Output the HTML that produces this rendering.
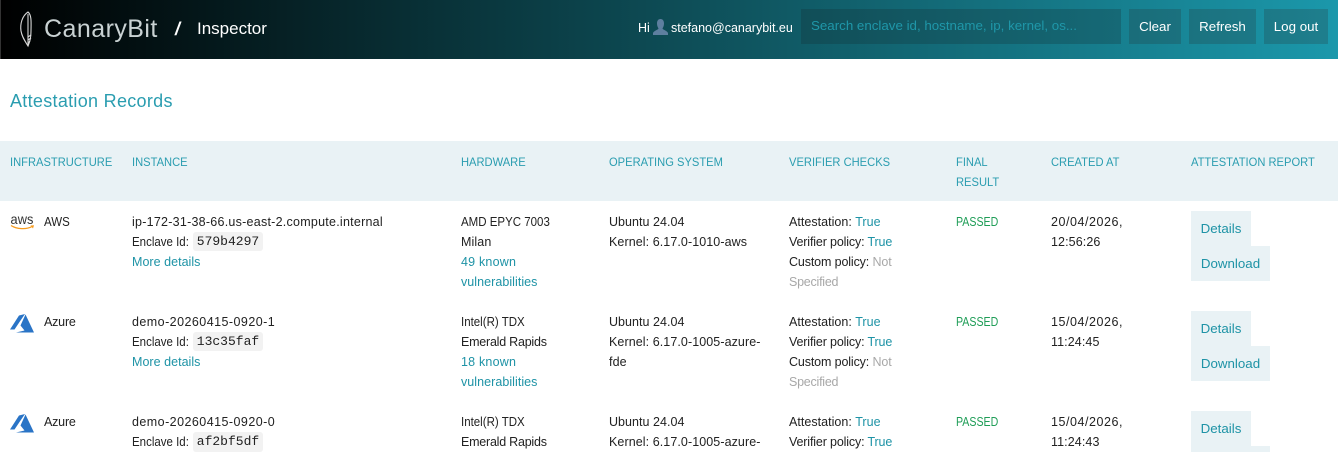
<!DOCTYPE html>
<html><head><meta charset="utf-8"><title>Inspector</title>
<style>
html,body{margin:0;padding:0;background:#fff;overflow:hidden;width:1338px;height:452px}
#p{position:relative;width:1338px;height:452px;overflow:hidden;font-family:"Liberation Sans",sans-serif;font-size:12.5px;color:#222;letter-spacing:.1px}
#p div,#p svg{position:absolute}
.t{white-space:nowrap;line-height:20px;height:20px}
.l{color:#1e93a6}.g{color:#a8a8a8}
.p{color:#1f9d57;letter-spacing:0;transform:scaleX(.85);transform-origin:0 0}
.h{color:#2a9db0;font-size:12px;letter-spacing:0;transform:scaleX(.93);transform-origin:0 0}
.q{letter-spacing:0;transform:scaleX(.92);transform-origin:0 0}
.m{letter-spacing:.03px}
.d{letter-spacing:.45px}
.k{letter-spacing:.08px}
.v{letter-spacing:-.15px}
.u{letter-spacing:-.13px}
.s{letter-spacing:-.24px}
.y{letter-spacing:.55px}
.b{background:#e9f2f5;color:#1e93a6;font-size:13.33px;letter-spacing:0;line-height:35px;height:35px;text-align:center}
.c{background:#f2f2f2;border-radius:3px;width:70px;height:19px;left:193px;font:13px/19px "Liberation Mono",monospace;letter-spacing:0;text-align:center;color:#222}
.w{background:rgba(40,40,40,.22);color:#fff;font-size:13.33px;letter-spacing:0;line-height:35px;height:35px;top:9px;text-align:center}
</style></head><body>
<div id="p">
<div style="left:0;top:0;width:1338px;height:59px;background:linear-gradient(90deg,#000 0,#1b98ab 100%)"></div>
<div style="left:0;top:0;width:1px;height:59px;background:#333"></div>
<svg style="left:18px;top:10px" width="18" height="39" viewBox="0 0 18 39" fill="none" stroke="#d8d8d8" stroke-width="1.1"><path d="M10 2C4 6 2 14 3 21C4 27 7 31 10 36C12 31 13 28 13 21C13 14 14 5 10 2Z"/><path d="M10 4V36M10 27L13 25M10 30L13 28M10 33L12 31"/></svg>
<div class="t" style="left:44px;top:15px;height:29px;line-height:29px;font-size:25px;letter-spacing:.45px;color:#c9d2d3">CanaryBit</div>
<div class="t" style="left:175px;top:19px;font-size:18px;font-style:italic;font-weight:bold;color:#fff;letter-spacing:0">/</div>
<div class="t" style="left:197px;top:19px;font-size:17px;color:#fff;letter-spacing:0">Inspector</div>
<div class="t" style="left:638px;top:18px;color:#fff;font-size:12.5px;letter-spacing:0">Hi</div>
<svg style="left:653px;top:19px" width="15" height="16" viewBox="0 0 15 16"><path d="M7.500 0C10 0 11 2 11 4.500C11 7 10 8.500 9.500 9.500C10 11 14 11.500 15 14V16H0V14C1 11.500 5 11 5.500 9.500C5 8.500 4 7 4 4.500C4 2 5 0 7.500 0Z" fill="#5e7f9f"/></svg>
<div class="t" style="left:671px;top:18px;color:#fff;font-size:12.5px;letter-spacing:0">stefano@canarybit.eu</div>
<div style="left:801px;top:9px;width:320px;height:35px;background:rgba(20,40,45,.25)"></div>
<div class="t" style="left:811px;top:16px;color:#1f97a9;font-size:13.33px;letter-spacing:0">Search enclave id, hostname, ip, kernel, os...</div>
<div class="w" style="left:1129px;width:52px">Clear</div>
<div class="w" style="left:1189px;width:67px">Refresh</div>
<div class="w" style="left:1264px;width:64px">Log out</div>

<div class="t" style="left:10px;top:90px;height:22px;line-height:22px;font-size:18px;letter-spacing:.3px;color:#2a9db0">Attestation Records</div>

<div style="left:0;top:141px;width:1338px;height:60px;background:#e9f2f5"></div>
<div class="t h" style="left:10px;top:152px">INFRASTRUCTURE</div>
<div class="t h" style="left:132px;top:152px">INSTANCE</div>
<div class="t h" style="left:461px;top:152px">HARDWARE</div>
<div class="t h" style="left:609px;top:152px">OPERATING SYSTEM</div>
<div class="t h" style="left:789px;top:152px">VERIFIER CHECKS</div>
<div class="t h" style="left:956px;top:152px">FINAL</div>
<div class="t h" style="left:956px;top:172px">RESULT</div>
<div class="t h" style="left:1051px;top:152px">CREATED AT</div>
<div class="t h" style="left:1191px;top:152px">ATTESTATION REPORT</div>

<!-- row 1 -->
<svg style="left:10px;top:214px" width="25" height="17" viewBox="0 0 25 17"><text x="0.500" y="10" font-family="Liberation Sans,sans-serif" font-size="14" fill="#333" textLength="23" lengthAdjust="spacingAndGlyphs">aws</text><path d="M1 11.500C7 15.500 17 15.500 22 12.500" fill="none" stroke="#f79b1d" stroke-width="1.300"/><path d="M20.500 11.500L24 11.300L23 14.500Z" fill="#f79b1d"/></svg>
<div class="t q" style="left:44px;top:212px">AWS</div>
<div class="t" style="left:132px;top:212px;letter-spacing:.25px">ip-172-31-38-66.us-east-2.compute.internal</div>
<div class="t q" style="left:132px;top:232px">Enclave Id:</div><div class="c" style="top:232px">579b4297</div>
<div class="t l m" style="left:132px;top:252px">More details</div>
<div class="t q" style="left:461px;top:212px">AMD EPYC 7003</div>
<div class="t" style="left:461px;top:232px">Milan</div>
<div class="t l" style="left:461px;top:252px;letter-spacing:.2px">49 known</div>
<div class="t l" style="left:461px;top:272px;letter-spacing:.05px">vulnerabilities</div>
<div class="t m" style="left:609px;top:212px">Ubuntu 24.04</div>
<div class="t k" style="left:609px;top:232px">Kernel: 6.17.0-1010-aws</div>
<div class="t m" style="left:789px;top:212px">Attestation: <span class="l">True</span></div>
<div class="t v" style="left:789px;top:232px">Verifier policy: <span class="l">True</span></div>
<div class="t u" style="left:789px;top:252px">Custom policy: <span class="g">Not</span></div>
<div class="t g s" style="left:789px;top:272px">Specified</div>
<div class="t p" style="left:956px;top:212px">PASSED</div>
<div class="t y" style="left:1051px;top:212px">20/04/2026,</div>
<div class="t" style="left:1051px;top:232px">12:56:26</div>
<div class="b" style="left:1191px;top:211px;width:60px">Details</div>
<div class="b" style="left:1191px;top:246px;width:79px">Download</div>

<!-- row 2 -->
<svg style="left:10px;top:314px" width="24" height="19" viewBox="0 0 24 19"><path d="M9 1.500L15 0L9.500 8L4.500 15.500H0Z" fill="#2a74c6"/><path d="M15.500 0.500L24 18.500H6L14.500 16.500L10.500 11.500Z" fill="#2a74c6"/></svg>
<div class="t" style="left:44px;top:312px;letter-spacing:-.2px">Azure</div>
<div class="t d" style="left:132px;top:312px">demo-20260415-0920-1</div>
<div class="t q" style="left:132px;top:332px">Enclave Id:</div><div class="c" style="top:332px">13c35faf</div>
<div class="t l m" style="left:132px;top:352px">More details</div>
<div class="t q" style="left:461px;top:312px">Intel(R) TDX</div>
<div class="t" style="left:461px;top:332px;letter-spacing:-.23px">Emerald Rapids</div>
<div class="t l" style="left:461px;top:352px;letter-spacing:.2px">18 known</div>
<div class="t l" style="left:461px;top:372px;letter-spacing:.05px">vulnerabilities</div>
<div class="t m" style="left:609px;top:312px">Ubuntu 24.04</div>
<div class="t k" style="left:609px;top:332px">Kernel: 6.17.0-1005-azure-</div>
<div class="t" style="left:609px;top:352px">fde</div>
<div class="t m" style="left:789px;top:312px">Attestation: <span class="l">True</span></div>
<div class="t v" style="left:789px;top:332px">Verifier policy: <span class="l">True</span></div>
<div class="t u" style="left:789px;top:352px">Custom policy: <span class="g">Not</span></div>
<div class="t g s" style="left:789px;top:372px">Specified</div>
<div class="t p" style="left:956px;top:312px">PASSED</div>
<div class="t y" style="left:1051px;top:312px">15/04/2026,</div>
<div class="t" style="left:1051px;top:332px">11:24:45</div>
<div class="b" style="left:1191px;top:311px;width:60px">Details</div>
<div class="b" style="left:1191px;top:346px;width:79px">Download</div>

<!-- row 3 -->
<svg style="left:10px;top:414px" width="24" height="19" viewBox="0 0 24 19"><path d="M9 1.500L15 0L9.500 8L4.500 15.500H0Z" fill="#2a74c6"/><path d="M15.500 0.500L24 18.500H6L14.500 16.500L10.500 11.500Z" fill="#2a74c6"/></svg>
<div class="t" style="left:44px;top:412px;letter-spacing:-.2px">Azure</div>
<div class="t d" style="left:132px;top:412px">demo-20260415-0920-0</div>
<div class="t q" style="left:132px;top:432px">Enclave Id:</div><div class="c" style="top:432px;height:20px">af2bf5df</div>
<div class="t q" style="left:461px;top:412px">Intel(R) TDX</div>
<div class="t" style="left:461px;top:432px;letter-spacing:-.23px">Emerald Rapids</div>
<div class="t m" style="left:609px;top:412px">Ubuntu 24.04</div>
<div class="t k" style="left:609px;top:432px">Kernel: 6.17.0-1005-azure-</div>
<div class="t m" style="left:789px;top:412px">Attestation: <span class="l">True</span></div>
<div class="t v" style="left:789px;top:432px">Verifier policy: <span class="l">True</span></div>
<div class="t p" style="left:956px;top:412px">PASSED</div>
<div class="t y" style="left:1051px;top:412px">15/04/2026,</div>
<div class="t" style="left:1051px;top:432px">11:24:43</div>
<div class="b" style="left:1191px;top:411px;width:60px">Details</div>
<div class="b" style="left:1191px;top:446px;width:79px;height:6px;overflow:hidden"></div>
</div>
</body></html>
